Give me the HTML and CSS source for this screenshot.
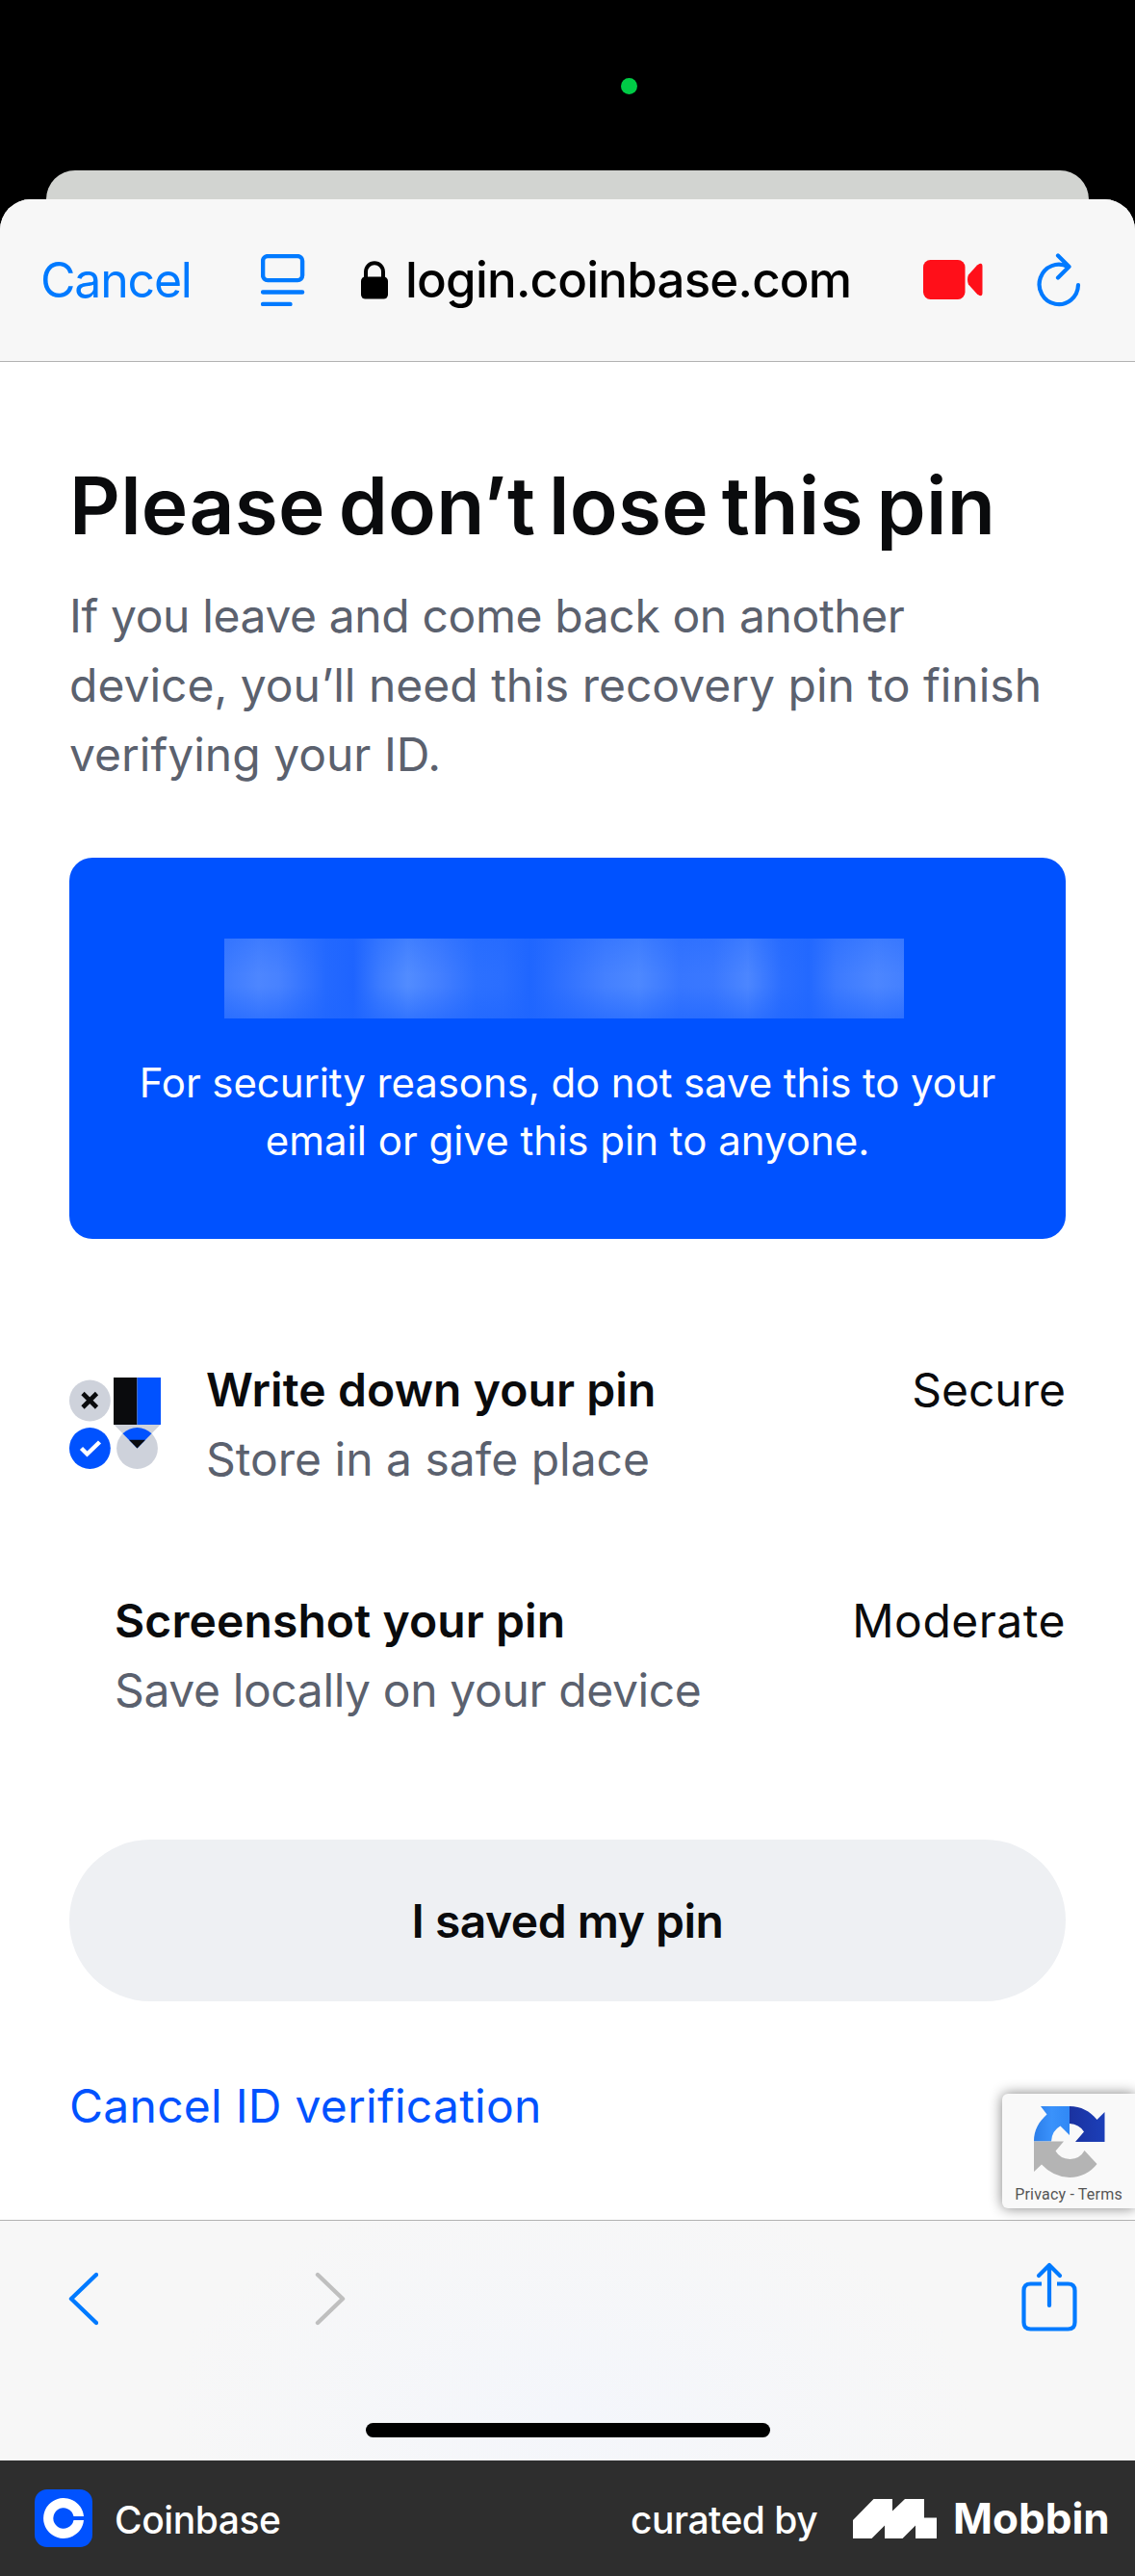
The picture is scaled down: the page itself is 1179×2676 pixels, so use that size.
FILE: index.html
```html
<!DOCTYPE html>
<html lang="en">
<head>
<meta charset="utf-8">
<title>Coinbase</title>
<link rel="stylesheet" href="styles.css">
</head>
<body>
<div class="status"><span class="camera-dot"></span></div>
<div class="stack"><div class="stack-card"></div></div>
<div class="sheet">
  <header class="browser-bar">
    <span class="cancel">Cancel</span>
    <svg class="reader" viewBox="0 0 46 54" fill="none" stroke="#007aff" stroke-width="4.4" stroke-linecap="round"><rect x="2.1" y="2.1" width="41" height="25" rx="5"/><path d="M2.1 39.500H43.1M2.1 52H30.5"/></svg>
    <svg class="lock" viewBox="0 0 28 40"><path d="M5 19V11.5a9 9.3 0 0 1 18 0V19" fill="none" stroke="#000" stroke-width="4"/><rect y="16.5" width="28" height="23" rx="4.5"/></svg>
    <span class="url">login.coinbase.com</span>
    <svg class="video" viewBox="0 0 62 42" fill="#ff0f19"><rect width="43.5" height="41" rx="7.5"/><path d="M47 15.500 56 5.500Q61.500 1.500 61.500 7V34Q61.500 39.500 56 35.500L47 25.500Q46 23.500 46 20.500T47 15.500Z"/></svg>
    <svg class="reload" viewBox="0 0 46 56" fill="none" stroke="#007aff" stroke-width="4.200" stroke-linecap="round" stroke-linejoin="round"><path d="M43 33A20.200 20.700 0 1 1 32.500 14.300"/><path d="M22 2.500 33.500 14 22 25.500"/></svg>
  </header>
  <main class="page">
    <h1 class="title">Please don’t lose this pin</h1>
    <p class="lead"><span class="snug">If you leave and come back on another</span><br>device, you’ll need this recovery pin to finish<br>verifying your ID.</p>
    <section class="pin-card">
      <div class="pin-mask"></div>
      <p class="pin-note"><span class="pin-note-first">For security reasons, do not save this to your</span><br>email or give this pin to anyone.</p>
    </section>
    <ul class="options">
      <li class="option">
        <svg class="option-icon" viewBox="0 0 96 96">
          <defs><clipPath id="tip"><path d="M46 49.500H95L70.500 74.500Z"/></clipPath></defs>
          <circle cx="21.400" cy="25" r="21.400" fill="#ced2db"/>
          <path d="M14 17.500 28.500 32M28.500 17.500 14 32" stroke="#0a0b0d" stroke-width="4.600"/>
          <circle cx="21.400" cy="74.500" r="21.400" fill="#0052ff"/>
          <path d="M12.500 74.500 18.500 80.500 31.500 68" fill="none" stroke="#fff" stroke-width="4.400"/>
          <path d="M46 49.500H95L70.500 74.500Z" fill="#ced2db"/>
          <circle cx="70.500" cy="74.500" r="21.400" fill="#ced2db"/>
          <circle cx="70.500" cy="74.500" r="21.400" fill="#0052ff" clip-path="url(#tip)"/>
          <path d="M62 65.800H79L70.500 74.500Z" fill="#0a0b0d"/>
          <path d="M46 1H70.500V50H46Z" fill="#0a0b0d"/><path d="M70.500 1H95V50H70.500Z" fill="#0052ff"/>
        </svg>
        <div class="option-text"><strong>Write down your pin</strong><span>Store in a safe place</span></div>
        <span class="level">Secure</span>
      </li>
      <li class="option">
        <div class="option-text option-text-bare"><strong>Screenshot your pin</strong><span class="snug">Save locally on your device</span></div>
        <span class="level level-wide">Moderate</span>
      </li>
    </ul>
    <button class="saved">I saved my pin</button>
    <a class="cancel-link">Cancel ID verification</a>
    <aside class="captcha">
      <svg viewBox="0 0 74 74"><defs><linearGradient id="lb"><stop stop-color="#2b7de9"/><stop offset=".5" stop-color="#3a92fb"/><stop offset="1" stop-color="#3088f5"/></linearGradient><linearGradient id="db"><stop stop-color="#1a32a0"/><stop offset="1" stop-color="#1c3fb8"/></linearGradient></defs>
        <path d="M0 36.500C0 25 5 16 13.500 8.500L7 0H37V30L27.500 20.500Q18.500 25.500 18 36.500Z" fill="url(#lb)"/>
        <path d="M37 0C49 0 58 5 65.500 14L73.500 6V37H43L52 26.500Q47 18.500 37 18Z" fill="url(#db)"/>
        <path d="M0 36.500H31L22.500 46.500Q27 54.500 37.500 55 48 54.500 52.500 46L65.500 60Q55 73.500 37 74 20 73.500 8 60.500L0 68Z" fill="#b4b4b4"/></svg>
      <span>Privacy - Terms</span>
    </aside>
  </main>
  <nav class="toolbar">
    <div class="tools">
      <svg class="chevron" viewBox="0 0 32 56" fill="none" stroke="#007aff" stroke-width="4.400" stroke-linecap="round" stroke-linejoin="round"><path d="M30 3 4 28 30 53"/></svg>
      <svg class="chevron" viewBox="0 0 32 56" fill="none" stroke="#bfbfbf" stroke-width="4.400" stroke-linecap="round" stroke-linejoin="round"><path d="M3 3 29 28 3 53"/></svg>
      <svg class="share" viewBox="0 0 58 72" fill="none" stroke="#007aff" stroke-width="4.200" stroke-linecap="round" stroke-linejoin="round"><path stroke-linecap="butt" d="M21 22.500H9.500Q2.500 22.500 2.500 29.500V62.500Q2.500 69.500 9.500 69.500H48.500Q55.500 69.500 55.500 62.500V29.500Q55.500 22.500 48.500 22.500H37"/><path d="M29 45V3M18 14 29 3 40 14"/></svg>
    </div>
    <div class="home-indicator"></div>
  </nav>
</div>
<footer class="credit">
  <svg class="app-icon" viewBox="0 0 60 60"><rect width="60" height="60" rx="13" fill="#0052ff"/><path d="M40.500 28H51A21 21 0 1 0 51 32H40.500A10.700 10.700 0 1 1 40.500 28Z" fill="#fff"/></svg>
  <span class="app-name">Coinbase</span>
  <span class="curated">curated by</span>
  <svg class="mobbin-mark" viewBox="0 0 87 41" fill="#fff"><path d="M0 22 21.500 0H41V12.500L54 0H74V19.500H87V41H65V27.500L51.500 41H33V27.500L19.500 41H0Z"/></svg>
  <span class="mobbin">Mobbin</span>
</footer>
</body>
</html>
```
FILE: styles.css
```css
* { box-sizing: border-box; margin: 0; padding: 0; }
body {
  width: 1179px;
  height: 2676px;
  overflow: hidden;
  background: #000;
  color: #0a0b0d;
  font-family: Inter, "Liberation Sans", sans-serif;
  font-size: 48px;
  line-height: 72px;
}
svg { display: block; flex: none; }
span { white-space: nowrap; }

.status { height: 177px; padding: 81px 0 0 645px; }
.camera-dot { display: block; width: 17px; height: 17px; border-radius: 50%; background: #00cb46; }
.stack { height: 30px; padding: 0 48px; }
.stack-card { height: 66px; border-radius: 30px 30px 0 0; background: #d2d4d1; }
.sheet {
  position: relative;
  height: 2349px;
  display: flex;
  flex-direction: column;
  border-radius: 32px 32px 0 0;
  overflow: hidden;
  background: #fff;
}

.browser-bar {
  height: 169px;
  display: flex;
  align-items: center;
  padding-left: 42px;
  background: #f7f7f7;
  border-bottom: 1px solid #b2b2b2;
}
.cancel { width: 229px; color: #007aff; font-size: 50px; letter-spacing: -1.2px; }
.reader { width: 46px; height: 54px; }
.lock { width: 28px; height: 40px; margin-left: 58px; }
.url { width: 538px; margin-left: 18px; color: #000; font-size: 51px; font-weight: 500; letter-spacing: -.78px; }
.video { width: 62px; height: 42px; }
.reload { width: 46px; height: 56px; margin-left: 56px; }

.page { position: relative; flex: 1; padding: 102px 72px 0; }
.title { font-size: 82px; line-height: 96px; font-weight: 600; letter-spacing: .25px; word-spacing: -7px; white-space: nowrap; }
.lead { margin-top: 30px; color: #5b616e; white-space: nowrap; }
.snug { letter-spacing: -.38px; }

.pin-card {
  height: 396px;
  margin-top: 71px;
  padding-top: 84px;
  border-radius: 24px;
  background: #0052ff;
  color: #fff;
}
.pin-mask {
  width: 706px;
  height: 83px;
  margin-left: 161px;
  background:
    linear-gradient(#1f66ff55, transparent 45%, transparent 60%, #1f66ff99),
    linear-gradient(90deg, #3d7bff, #4d86ff 5%, #4882ff 8%, #2469ff 15%, #1e64ff 19%, #3d7cff 23%, #528cff 27%, #427eff 32%, #2c70ff 37%, #2a6eff 41%, #1f66ff 45%, #3071ff 50%, #4480ff 56%, #4d88ff 61%, #3776ff 67%, #3a78ff 72%, #4c86ff 77%, #2b6eff 82%, #2369ff 86%, #3c7aff 90%, #4c86ff 96%, #4480ff);
}
.pin-note { margin-top: 37px; font-size: 42px; line-height: 60px; text-align: center; white-space: nowrap; }
.pin-note-first { letter-spacing: -.1px; }

.options { margin-top: 121px; list-style: none; display: flex; flex-direction: column; gap: 96px; }
.option { height: 144px; display: flex; align-items: flex-start; }
.option-icon { width: 96px; height: 96px; margin: 22px 0 0; }
.option-text { flex: 1; margin-left: 46px; display: flex; flex-direction: column; }
.option-text-bare { margin-left: 47px; }
.option-text strong { font-weight: 600; white-space: nowrap; letter-spacing: .1px; }
.option-text span { color: #5b616e; }
.level-wide { letter-spacing: .5px; }

.saved {
  display: block;
  width: 100%;
  height: 168px;
  margin-top: 119px;
  padding-top: 1px;
  border: 0;
  border-radius: 84px;
  background: #eef0f3;
  color: #0a0b0d;
  font: 600 48px/72px Inter, "Liberation Sans", sans-serif;
  letter-spacing: -.5px;
}
.cancel-link { display: block; margin-top: 73px; color: #0052ff; letter-spacing: .25px; }

.captcha {
  position: absolute;
  right: 0;
  bottom: 12px;
  width: 138px;
  height: 119px;
  padding-top: 13px;
  display: flex;
  flex-direction: column;
  align-items: center;
  border-radius: 6px 0 0 6px;
  background: #f9f9f9;
  box-shadow: 0 0 14px #808080;
  color: #555;
  font: 16px/20px Roboto, sans-serif;
  letter-spacing: .2px;
}
.captcha svg { width: 74px; height: 74px; margin: 0 0 8px 1px; }

.toolbar {
  height: 250px;
  border-top: 1px solid #b2b2b2;
  background: radial-gradient(ellipse 420px 240px at 50% 80%, #f4f6fb, #f7f7f7);
}
.tools { display: flex; align-items: flex-start; padding: 53px 0 0 70px; height: 210px; }
.chevron { width: 32px; height: 56px; margin-right: 225px; }
.share { width: 58px; height: 72px; margin: -10px 0 0 477px; }
.home-indicator { width: 420px; height: 15px; margin: 0 auto; border-radius: 8px; background: #000; }

.credit {
  height: 120px;
  display: flex;
  align-items: center;
  padding-left: 36px;
  background: #2e2e2e;
  color: #fff;
  font-size: 39px;
  font-weight: 500;
}
.app-icon { width: 60px; height: 60px; }
.app-name { width: 536px; margin-left: 23px; padding-top: 3px; letter-spacing: -.44px; }
.curated { width: 231px; padding-top: 3px; letter-spacing: -.5px; }
.mobbin-mark { width: 87px; height: 41px; }
.mobbin { margin-left: 17px; font-size: 44px; font-weight: 700; }
```
